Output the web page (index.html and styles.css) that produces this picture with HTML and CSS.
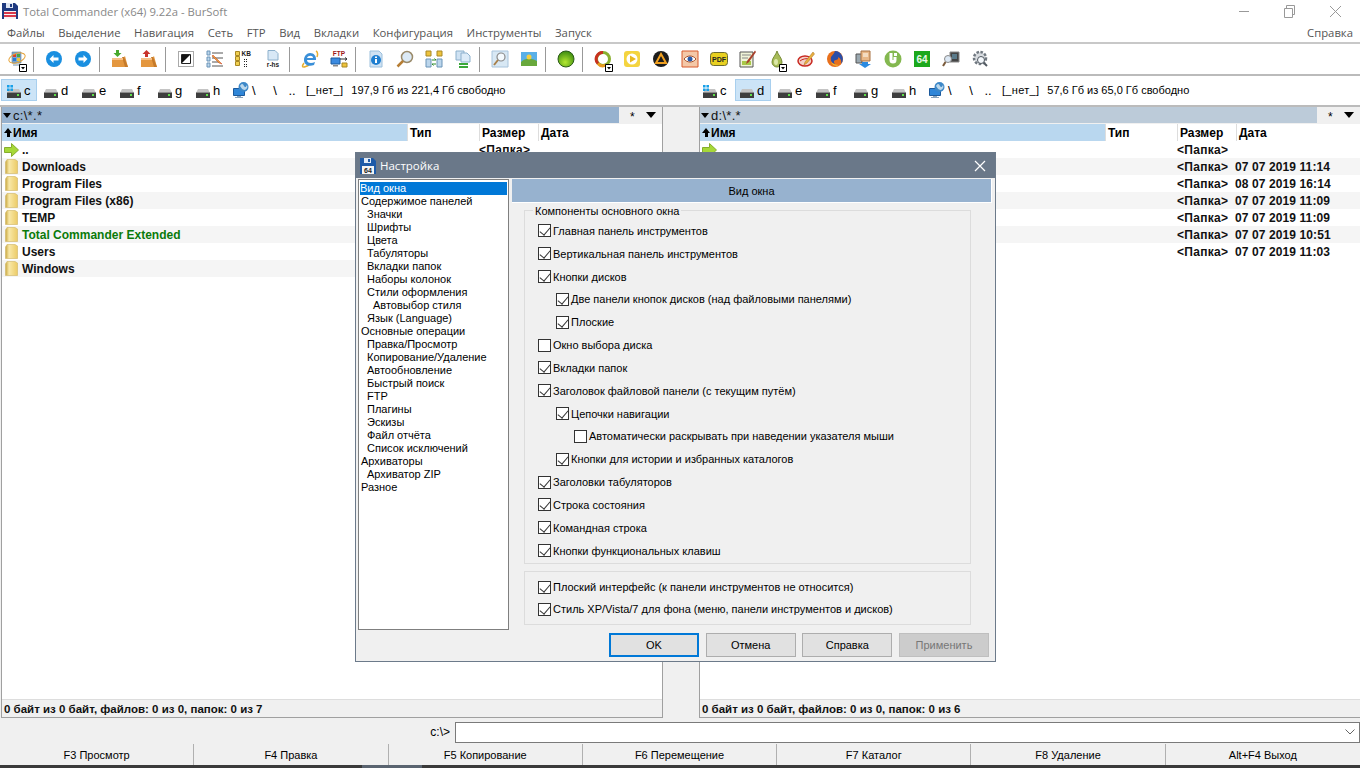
FILE: index.html
```html
<!DOCTYPE html>
<html lang="ru">
<head>
<meta charset="utf-8">
<title>Total Commander</title>
<link rel="stylesheet" href="styles.css">
</head>
<body>
<svg class="defs" width="0" height="0">
  <defs>
    <symbol id="floppy" viewBox="0 0 16 16"><path d="M0 0h13l3 3v13H0z" fill="#1f3a80"/><path d="M4 0h7v5H4z" fill="#dfe6f2"/><path d="M8 1h2v3H8z" fill="#1f3a80"/><path d="M2 8h12v8H2z" fill="#f4f4f4"/><path d="M2 9h12v2H2zM2 12h12v2H2z" fill="#d8394a"/></symbol>
    <symbol id="floppy64" viewBox="0 0 16 16"><path d="M0 0h13l3 3v13H0z" fill="#1d5aa8"/><path d="M4 0h7v5H4z" fill="#dfe9f6"/><path d="M8 1h2v3H8z" fill="#1d5aa8"/><path d="M2 8h12v8H2z" fill="#f4f4f4"/><text x="8" y="15" font-size="7" font-weight="700" text-anchor="middle" fill="#222" font-family="Liberation Sans">64</text></symbol>
    <symbol id="disk" viewBox="0 0 14 9"><path d="M2 0h10l2 4H0z" fill="#c4c4c4"/><path d="M0 3h14v6H0z" fill="#3e3e3e"/><path d="M0 3h14v1H0z" fill="#8c8c8c"/><path d="M10 5h2v2h-2z" fill="#5ee04a"/></symbol>
    <symbol id="win" viewBox="0 0 7 7"><path d="M0 0h3v3H0zM4 0h3v3H4zM0 4h3v3H0zM4 4h3v3H4z" fill="#18a0e8"/></symbol>
    <symbol id="net" viewBox="0 0 16 16"><path d="M.5 6.500h11v7H.5z" fill="#2f86d8" stroke="#1c5a9c"/><path d="M4 14h4v1h2v1H2v-1h2z" fill="#8aa4bc"/><circle cx="10.500" cy="5" r="5" fill="#3d88c8"/><path d="M7 4c2-3 3-2 4 0s2 1 3-1c1 2 0 4-2 5-2 0-3-1-5-4z" fill="#bcd8ec"/></symbol>
    <symbol id="folder" viewBox="0 0 13 15"><defs><linearGradient id="fg" x1="0" x2="1" y1="0" y2="0"><stop offset="0" stop-color="#c8a73e"/><stop offset=".3" stop-color="#f8e8a8"/><stop offset="1" stop-color="#eccb66"/></linearGradient></defs><path d="M.5 3 2 .500h8L12.500 2v12.500H.5z" fill="url(#fg)" stroke="#d4bc70" stroke-width=".7"/></symbol>
    <symbol id="uparrow" viewBox="0 0 15 14"><path d="M.5 4.500h7V.5l7 6.500-7 6.500v-4h-7z" fill="#a6d838" stroke="#86ad2c"/></symbol>
    <symbol id="circleL" viewBox="0 0 16 16"><circle cx="8" cy="8" r="8" fill="#1a8fe0"/><path d="M7.500 4 3.500 8l4 4V9.500h5v-3h-5z" fill="#fff"/></symbol>
    <symbol id="circleR" viewBox="0 0 16 16"><circle cx="8" cy="8" r="8" fill="#1a8fe0"/><path d="M8.500 4l4 4-4 4V9.500h-5v-3h5z" fill="#fff"/></symbol>
    <symbol id="boxD" viewBox="0 0 18 18"><path d="M1 8h11l2-2 3 11H1z" fill="#e4973f"/><path d="M11 7h2l4 10h-3z" fill="#c57a2a"/><path d="M1 8h11v2H1z" fill="#f6c088"/><path d="M5 0h3v3h2.500L6.500 7 2.500 3H5z" fill="#46a82c"/></symbol>
    <symbol id="boxU" viewBox="0 0 18 18"><path d="M1 8h11l2-2 3 11H1z" fill="#e4973f"/><path d="M11 7h2l4 10h-3z" fill="#c57a2a"/><path d="M1 8h11v2H1z" fill="#f6c088"/><path d="M5 7h3V4h2.500L6.500 0 2.500 4H5z" fill="#c8332c"/></symbol>
    <symbol id="mag" viewBox="0 0 18 18"><circle cx="11" cy="7" r="5.500" fill="#dceaf6" stroke="#9a8a6a" stroke-width="1.500"/><path d="M7 11 1.500 16.500" stroke="#b77e34" stroke-width="2.500"/></symbol>
    <symbol id="arrowbox" viewBox="0 0 8 8"><path d="M.5.500h7v7h-7z" fill="#fff" stroke="#000"/><path d="M2 3h4L4 5.500z" fill="#000"/></symbol>
  </defs>
</svg>

<div class="app">
  <header class="titlebar">
    <svg class="title-ic"><use href="#floppy"/></svg>
    <span class="title-text">Total Commander (x64) 9.22a - BurSoft</span>
    <div class="winbtns">
      <svg class="wb" viewBox="0 0 46 21"><path d="M18 10.500h10" stroke="#999"/></svg>
      <svg class="wb" viewBox="0 0 46 21"><path d="M17.500 7.500h8v9h-8zM19.500 7V4.500h8v9H26" fill="none" stroke="#999"/></svg>
      <svg class="wb" viewBox="0 0 46 21"><path d="M17 5l11 11M28 5 17 16" stroke="#999"/></svg>
    </div>
  </header>
  <nav class="menubar">
    <span>Файлы</span><span>Выделение</span><span>Навигация</span><span>Сеть</span><span>FTP</span><span>Вид</span><span>Вкладки</span><span>Конфигурация</span><span>Инструменты</span><span>Запуск</span><span class="menu-help">Справка</span>
  </nav>
  <div class="toolbar">
    <div class="tb"><svg viewBox="0 0 18 18"><path d="M4 2h9v11H4z" fill="#7ea6c8" stroke="#5f7f9c" stroke-width=".6"/><path d="M5 4h3v3H5z" fill="#d8402c"/><path d="M9 4h3v3H9z" fill="#45a845"/><path d="M5 8h3v3H5z" fill="#2a78d8"/><path d="M9 8h3v3H9z" fill="#eec33c"/><path d="M5 13h7v3H5z" fill="#b8c8d4"/><ellipse cx="9" cy="8" rx="8.500" ry="4.500" fill="none" stroke="#e6a43c" transform="rotate(-20 9 8)"/></svg><svg class="tb-drop"><use href="#arrowbox"/></svg></div>
    <i class="sep"></i>
    <div class="tb"><svg class="s16"><use href="#circleL"/></svg></div>
    <div class="tb"><svg class="s16"><use href="#circleR"/></svg></div>
    <i class="sep"></i>
    <div class="tb"><svg viewBox="0 0 18 18"><use href="#boxD"/></svg></div>
    <div class="tb"><svg viewBox="0 0 18 18"><use href="#boxU"/></svg></div>
    <i class="sep"></i>
    <div class="tb"><svg class="s16" viewBox="0 0 16 16"><path d="M.5.500h15v15H.5z" fill="none" stroke="#555" stroke-dasharray="1 1"/><path d="M3.500 3.500h9v9h-9z" fill="#fff" stroke="#222"/><path d="M4 4h8L4 12z" fill="#111"/></svg></div>
    <div class="tb"><svg viewBox="0 0 18 18"><path d="M1 1h3v4H1zM1 7h3v4H1zM1 13h3v4H1z" fill="#bcd6ec" stroke="#6a94b8"/><path d="M6 3h11M6 8h11M6 12h7M6 16h11" stroke="#555"/><path d="M7 5l7 7 2 2-3-1-7-7z" fill="#e8a43c" stroke="#c8381c" stroke-width=".5"/></svg></div>
    <div class="tb"><svg viewBox="0 0 18 18"><path d="M.5 1.500h4v4h-4zM.5 6.500h4v4h-4zM.5 11.500h4v4h-4z" fill="#f0cf50" stroke="#a88824"/><text x="6.500" y="6" class="svgt" font-size="6.500" font-weight="700">KB</text><path d="M9 9h1v1H9zM11 9h1v1h-1zM9 11h1v1H9zM11 11h1v1h-1zM9 14h1v1H9zM11 14h1v1h-1zM9 16h1v1H9zM11 16h1v1h-1z" fill="#222"/></svg></div>
    <div class="tb"><svg viewBox="0 0 18 18"><path d="M4 .500h7l3 3V10H4z" fill="#d8e8f6" stroke="#8cb0cc"/><text x="9" y="16.500" class="svgt" font-size="6.500" font-weight="700" text-anchor="middle">r-hs</text></svg></div>
    <i class="sep"></i>
    <div class="tb"><svg viewBox="0 0 18 18"><path d="M15 1c2 1 2 3 1 6M3 13c-2 3-2 4 0 4 1 0 3-1 5-2" fill="none" stroke="#e8b030" stroke-width="1.500"/><path d="M9 3c4 0 6 3 6 6v1H6c0 3 4 4 8 2l-1 3c-5 2-10 0-10-5 0-4 3-7 6-7zM6 8h6c0-3-5-3-6 0z" fill="#3a8fd8"/></svg></div>
    <div class="tb"><svg viewBox="0 0 18 18"><text x="9" y="6" class="svgt ftp" font-size="6.500" font-weight="700" text-anchor="middle">FTP</text><path d="M1 8h9v6H1z" fill="#3a8ae0" stroke="#1c5a9c"/><path d="M3 15h5v1.500H3z" fill="#888"/><path d="M12 13h5v4h-5z" fill="#eec33c" stroke="#a88824"/><path d="M10 9h7M15 7.500 17 9l-2 1.500" fill="none" stroke="#333"/></svg></div>
    <i class="sep"></i>
    <div class="tb"><svg viewBox="0 0 18 18"><path d="M3 1h9l3 3v13H3z" fill="#cfe2f3" stroke="#9cc0dc"/><circle cx="9" cy="10" r="5" fill="#1e7ed0"/><path d="M8 6.500h2V8H8zM8 9h2v4H8z" fill="#fff"/></svg></div>
    <div class="tb"><svg viewBox="0 0 18 18"><use href="#mag"/></svg></div>
    <div class="tb"><svg viewBox="0 0 18 18"><path d="M1 1h5v5H1zM12 1h5v5h-5z" fill="#eec33c" stroke="#a88824"/><path d="M1 9h5v8H1zM12 9h5v8h-5z" fill="#bcd6ec" stroke="#6a94b8"/><path d="M7 10h4l-1.500-1.500M11 14H7l1.500 1.500" fill="none" stroke="#2a8a2a"/></svg></div>
    <div class="tb"><svg viewBox="0 0 18 18"><path d="M2 1h8v9H2z" fill="#cfe2f3" stroke="#8cb0cc"/><path d="M7 3h6l3 3v6H7z" fill="#dcebf8" stroke="#8cb0cc"/><path d="M5 13h9v2H5zM5 16h9v2H5z" fill="#3aa83a"/></svg></div>
    <i class="sep"></i>
    <div class="tb"><svg viewBox="0 0 18 18"><path d="M1 1h16v16H1z" fill="#d8e8f4" stroke="#a8c4dc"/><circle cx="10" cy="7" r="4" fill="#f4fafe" stroke="#8a8a8a" stroke-width="1.200"/><path d="M7 10l-4 5" stroke="#a8804a" stroke-width="2"/></svg></div>
    <div class="tb"><svg viewBox="0 0 18 18"><path d="M1 2h16v14H1z" fill="#5ab0e8"/><path d="M1 16v-4c4-4 10-4 16-1v5z" fill="#68a83c"/><circle cx="9" cy="7" r="2.500" fill="#f4d040"/></svg></div>
    <i class="sep"></i>
    <div class="tb"><svg viewBox="0 0 18 18"><defs><radialGradient id="gs" cx=".45" cy=".7" r=".7"><stop offset="0" stop-color="#b4e830"/><stop offset="1" stop-color="#3a8a10"/></radialGradient></defs><circle cx="9" cy="9" r="8" fill="url(#gs)" stroke="#2a5a18"/></svg></div>
    <i class="sep"></i>
    <div class="tb"><svg viewBox="0 0 18 18"><circle cx="9" cy="9" r="6.500" fill="none" stroke="#8ab030" stroke-width="3"/><path d="M9 2.500A6.500 6.500 0 0 0 4 13.500" fill="none" stroke="#c83020" stroke-width="3"/><path d="M4 13.500A6.500 6.500 0 0 0 12 15" fill="none" stroke="#e89a20" stroke-width="3"/></svg><svg class="tb-drop"><use href="#arrowbox"/></svg></div>
    <div class="tb"><svg viewBox="0 0 18 18"><rect x="1" y="1" width="16" height="16" rx="3" fill="#f4d440"/><circle cx="9" cy="9" r="5.500" fill="#fff"/><path d="M7 5.500 13 9l-6 3.500z" fill="#e8b820"/></svg></div>
    <div class="tb"><svg viewBox="0 0 18 18"><circle cx="9" cy="9" r="8" fill="#1c1c1c"/><path d="M9 4l5 9H4z" fill="none" stroke="#f0a020" stroke-width="2"/></svg></div>
    <div class="tb"><svg viewBox="0 0 18 18"><path d="M1 1h16v16H1z" fill="#f4c8a8" stroke="#d85a2c"/><path d="M3 9c3-4 9-4 12 0-3 4-9 4-12 0z" fill="#fff" stroke="#a85028"/><circle cx="9" cy="9" r="2.500" fill="#2a5aa8"/></svg></div>
    <div class="tb"><svg viewBox="0 0 18 14"><rect x=".5" y=".5" width="17" height="13" rx="3" fill="#e8d020" stroke="#6a6a30"/><text x="9" y="10" class="svgt" font-size="7" font-weight="700" text-anchor="middle">PDF</text></svg></div>
    <div class="tb"><svg viewBox="0 0 18 18"><path d="M1 2h13v15H1z" fill="#f0f4d8" stroke="#555"/><path d="M3 5h9M3 8h6" stroke="#888"/><path d="M3 11h9v4H3z" fill="#a8c848"/><path d="M16 .500 8 11l-1 3 3-2L17 2z" fill="#a8402c"/></svg></div>
    <div class="tb"><svg viewBox="0 0 18 18"><path d="M9 1c1 4 5 7 5 11a5 5 0 0 1-10 0c0-4 4-7 5-11z" fill="#a8bc58" stroke="#788c38"/><ellipse cx="8" cy="12" rx="2" ry="3" fill="#dce8a8"/></svg><svg class="tb-drop"><use href="#arrowbox"/></svg></div>
    <div class="tb"><svg viewBox="0 0 18 18"><ellipse cx="8" cy="11" rx="7" ry="5" fill="#f4d0c8" stroke="#c82820" stroke-width="1.500"/><path d="M3 11c2-2 7-3 10-2" fill="none" stroke="#c82820"/><path d="M16 2 8 12l-1 3 3-2L17.500 4z" fill="#e8b040" stroke="#a87020" stroke-width=".5"/></svg></div>
    <div class="tb"><svg viewBox="0 0 18 18"><circle cx="9" cy="9" r="8" fill="#e8701c"/><path d="M9 1a8 8 0 0 1 6 13c1-4-1-6-3-7 1 2-1 3-2 3-2 0-3 2-1 4-3-1-5-3-4-7 1-2 3-3 4-6z" fill="#2a4ea8"/><path d="M5 12c1 3 5 5 8 3-4 0-6-1-8-3z" fill="#f4c030"/></svg></div>
    <div class="tb"><svg viewBox="0 0 18 18"><path d="M1 4h6v9H1z" fill="#9aa8b0" stroke="#555"/><path d="M6 1h9v10H6z" fill="#e8b888" stroke="#a87040"/><path d="M8 3h5v4H8z" fill="#f4dcc0"/><path d="M7 12h6v2h3l-6 4-6-4h3z" fill="#2a8ae0"/></svg></div>
    <div class="tb"><svg viewBox="0 0 18 18"><circle cx="9" cy="9" r="8.500" fill="#84b850"/><path d="M5.500 3v7a3.500 3.500 0 0 0 7 0V7h-3v3h-1V3z" fill="#fff"/><path d="M10 3h3v3h-3z" fill="#fff"/></svg></div>
    <div class="tb"><svg viewBox="0 0 18 18"><path d="M1 1h16v16H1z" fill="#1ca81c"/><text x="9" y="13" class="svgt s64" font-size="10" font-weight="700" text-anchor="middle">64</text></svg></div>
    <div class="tb"><svg viewBox="0 0 18 18"><path d="M8 2h9v10H8z" fill="#444" stroke="#888"/><path d="M10 4h5v5h-5z" fill="#5a7a8a"/><circle cx="6" cy="9" r="3.500" fill="#dce8f4" stroke="#8a8a8a"/><path d="M3.500 12 1 16" stroke="#7a5a3a" stroke-width="2"/></svg></div>
    <div class="tb"><svg viewBox="0 0 18 18"><circle cx="9" cy="8" r="6" fill="#d8dce0" stroke="#707880" stroke-width="2.500" stroke-dasharray="2.500 1.500"/><circle cx="10" cy="10" r="3.500" fill="#f4f8fc" stroke="#505860"/><path d="M13 13l3 3" stroke="#505860" stroke-width="2"/></svg></div>
  </div>
  <div class="drivebars">
    <div class="drivebar">
      <div class="drive c active"><svg class="win"><use href="#win"/></svg><svg class="dk"><use href="#disk"/></svg><span>c</span></div>
      <div class="drive"><svg class="dk"><use href="#disk"/></svg><span>d</span></div>
      <div class="drive"><svg class="dk"><use href="#disk"/></svg><span>e</span></div>
      <div class="drive"><svg class="dk"><use href="#disk"/></svg><span>f</span></div>
      <div class="drive"><svg class="dk"><use href="#disk"/></svg><span>g</span></div>
      <div class="drive"><svg class="dk"><use href="#disk"/></svg><span>h</span></div>
      <div class="drive net"><svg class="nt"><use href="#net"/></svg><span>\</span></div>
      <span class="drv-sym">\</span><span class="drv-sym dots">..</span>
      <span class="drv-none">[_нет_]</span>
      <span class="drv-free">197,9 Гб из 221,4 Гб свободно</span>
    </div>
    <div class="drivebar">
      <div class="drive c"><svg class="win"><use href="#win"/></svg><svg class="dk"><use href="#disk"/></svg><span>c</span></div>
      <div class="drive active"><svg class="dk"><use href="#disk"/></svg><span>d</span></div>
      <div class="drive"><svg class="dk"><use href="#disk"/></svg><span>e</span></div>
      <div class="drive"><svg class="dk"><use href="#disk"/></svg><span>f</span></div>
      <div class="drive"><svg class="dk"><use href="#disk"/></svg><span>g</span></div>
      <div class="drive"><svg class="dk"><use href="#disk"/></svg><span>h</span></div>
      <div class="drive net"><svg class="nt"><use href="#net"/></svg><span>\</span></div>
      <span class="drv-sym">\</span><span class="drv-sym dots">..</span>
      <span class="drv-none">[_нет_]</span>
      <span class="drv-free">57,6 Гб из 65,0 Гб свободно</span>
    </div>
  </div>
  <main class="panels">
    <section class="panel">
      <div class="path active"><span class="path-text"><b class="tri"></b>c:\*.*</span><span class="path-star">*</span><b class="path-down"></b></div>
      <div class="cols">
        <div class="col name active"><b class="up"></b>Имя</div><div class="col type">Тип</div><div class="col size">Размер</div><div class="col date">Дата</div>
      </div>
      <div class="rows">
        <div class="row"><svg class="up-ic"><use href="#uparrow"/></svg><span class="fname">..</span><span class="fsize">&lt;Папка&gt;</span><span class="fdate"></span></div>
        <div class="row alt"><svg class="fol"><use href="#folder"/></svg><span class="fname">Downloads</span></div>
        <div class="row"><svg class="fol"><use href="#folder"/></svg><span class="fname">Program Files</span></div>
        <div class="row alt"><svg class="fol"><use href="#folder"/></svg><span class="fname">Program Files (x86)</span></div>
        <div class="row"><svg class="fol"><use href="#folder"/></svg><span class="fname">TEMP</span></div>
        <div class="row alt green"><svg class="fol"><use href="#folder"/></svg><span class="fname">Total Commander Extended</span></div>
        <div class="row"><svg class="fol"><use href="#folder"/></svg><span class="fname">Users</span></div>
        <div class="row alt"><svg class="fol"><use href="#folder"/></svg><span class="fname">Windows</span></div>
      </div>
      <div class="status">0 байт из 0 байт, файлов: 0 из 0, папок: 0 из 7</div>
    </section>
    <section class="panel right">
      <div class="path"><span class="path-text"><b class="tri"></b>d:\*.*</span><span class="path-star">*</span><b class="path-down"></b></div>
      <div class="cols">
        <div class="col name active"><b class="up"></b>Имя</div><div class="col type">Тип</div><div class="col size">Размер</div><div class="col date">Дата</div>
      </div>
      <div class="rows">
        <div class="row"><svg class="up-ic"><use href="#uparrow"/></svg><span class="fname"></span><span class="fsize">&lt;Папка&gt;</span><span class="fdate"></span></div>
        <div class="row alt"><span class="fname"></span><span class="fsize">&lt;Папка&gt;</span><span class="fdate">07 07 2019 11:14</span></div>
        <div class="row"><span class="fname"></span><span class="fsize">&lt;Папка&gt;</span><span class="fdate">08 07 2019 16:14</span></div>
        <div class="row alt"><span class="fname"></span><span class="fsize">&lt;Папка&gt;</span><span class="fdate">07 07 2019 11:09</span></div>
        <div class="row"><span class="fname"></span><span class="fsize">&lt;Папка&gt;</span><span class="fdate">07 07 2019 11:09</span></div>
        <div class="row alt"><span class="fname"></span><span class="fsize">&lt;Папка&gt;</span><span class="fdate">07 07 2019 10:51</span></div>
        <div class="row"><span class="fname"></span><span class="fsize">&lt;Папка&gt;</span><span class="fdate">07 07 2019 11:03</span></div>
      </div>
      <div class="status">0 байт из 0 байт, файлов: 0 из 0, папок: 0 из 6</div>
    </section>
  </main>
  <div class="cmd">
    <span class="cmd-label">c:\&gt;</span>
    <div class="cmd-input"><svg class="chev" viewBox="0 0 10 6"><path d="M.5.500 5 5 9.500.5" fill="none" stroke="#666"/></svg></div>
  </div>
  <footer class="fkeys">
    <span>F3 Просмотр</span><span>F4 Правка</span><span>F5 Копирование</span><span>F6 Перемещение</span><span>F7 Каталог</span><span>F8 Удаление</span><span>Alt+F4 Выход</span>
  </footer>
  <div class="taskbar"><i class="task-active"></i></div>
</div>

<div class="dialog">
  <div class="dlg-title">
    <svg class="dlg-ic"><use href="#floppy64"/></svg>
    <span>Настройка</span>
    <svg class="dlg-close" viewBox="0 0 12 12"><path d="M1 1l10 10M11 1 1 11" stroke="#fff" stroke-width="1.200"/></svg>
  </div>
  <div class="dlg-body">
    <ul class="tree">
      <li class="sel">Вид окна</li>
      <li>Содержимое панелей</li>
      <li class="l1">Значки</li>
      <li class="l1">Шрифты</li>
      <li class="l1">Цвета</li>
      <li class="l1">Табуляторы</li>
      <li class="l1">Вкладки папок</li>
      <li class="l1">Наборы колонок</li>
      <li class="l1">Стили оформления</li>
      <li class="l2">Автовыбор стиля</li>
      <li class="l1">Язык (Language)</li>
      <li>Основные операции</li>
      <li class="l1">Правка/Просмотр</li>
      <li class="l1">Копирование/Удаление</li>
      <li class="l1">Автообновление</li>
      <li class="l1">Быстрый поиск</li>
      <li class="l1">FTP</li>
      <li class="l1">Плагины</li>
      <li class="l1">Эскизы</li>
      <li class="l1">Файл отчёта</li>
      <li class="l1">Список исключений</li>
      <li>Архиваторы</li>
      <li class="l1">Архиватор ZIP</li>
      <li>Разное</li>
    </ul>
    <div class="page">
      <div class="page-head">Вид окна</div>
      <fieldset class="group main-group">
        <legend>Компоненты основного окна</legend>
        <label class="chk"><i class="box on"></i>Главная панель инструментов</label>
        <label class="chk"><i class="box on"></i>Вертикальная панель инструментов</label>
        <label class="chk"><i class="box on"></i>Кнопки дисков</label>
        <label class="chk in1"><i class="box on"></i>Две панели кнопок дисков (над файловыми панелями)</label>
        <label class="chk in1"><i class="box on"></i>Плоские</label>
        <label class="chk"><i class="box"></i>Окно выбора диска</label>
        <label class="chk"><i class="box on"></i>Вкладки папок</label>
        <label class="chk"><i class="box on"></i>Заголовок файловой панели (с текущим путём)</label>
        <label class="chk in1"><i class="box on"></i>Цепочки навигации</label>
        <label class="chk in2"><i class="box"></i>Автоматически раскрывать при наведении указателя мыши</label>
        <label class="chk in1"><i class="box on"></i>Кнопки для истории и избранных каталогов</label>
        <label class="chk"><i class="box on"></i>Заголовки табуляторов</label>
        <label class="chk"><i class="box on"></i>Строка состояния</label>
        <label class="chk"><i class="box on"></i>Командная строка</label>
        <label class="chk"><i class="box on"></i>Кнопки функциональных клавиш</label>
      </fieldset>
      <div class="group second-group">
        <label class="chk"><i class="box on"></i>Плоский интерфейс (к панели инструментов не относится)</label>
        <label class="chk"><i class="box on"></i>Стиль XP/Vista/7 для фона (меню, панели инструментов и дисков)</label>
      </div>
    </div>
  </div>
  <div class="dlg-btns">
    <button class="btn default">OK</button>
    <button class="btn">Отмена</button>
    <button class="btn">Справка</button>
    <button class="btn disabled">Применить</button>
  </div>
</div>
</body>
</html>
```
FILE: styles.css
```css
* { box-sizing: border-box; }
html, body { margin: 0; height: 100%; overflow: hidden; }
body { font-family: "Liberation Sans", Arial, sans-serif; font-size: 11px; color: #000; background: #f0f0f0; position: relative; }
.defs { position: absolute; }
.app { width: 1360px; height: 768px; display: flex; flex-direction: column; }

.titlebar { height: 22px; background: #fff; display: flex; align-items: center; padding-left: 2px; flex: none; }
.title-ic { width: 16px; height: 16px; margin-right: 5px; }
.title-text { font-family: "Open Sans", sans-serif; font-size: 11.3px; color: #888; }
.winbtns { margin-left: auto; margin-right: 1px; display: flex; }
.wb { width: 46px; height: 21px; }

.menubar { height: 22px; background: #fff; display: flex; align-items: center; padding-left: 7px; gap: 13.6px; flex: none; font-family: "Open Sans", sans-serif; font-size: 11.3px; color: #555; border-bottom: 2px solid #c8c8c8; }
.menu-help { margin-left: auto; margin-right: 7px; }

.toolbar { height: 32px; background: #fff; display: flex; align-items: center; padding-left: 2px; flex: none; border-bottom: 2px solid #bbb; }
.tb { width: 29px; height: 22px; display: flex; align-items: center; justify-content: center; position: relative; flex: none; }
.tb svg { width: 18px; height: 18px; }
.tb svg.s16 { width: 16px; height: 16px; }
.tb .tb-drop { position: absolute; width: 8px; height: 8px; right: 4px; bottom: -2px; }
.svgt { font-family: "Liberation Sans", sans-serif; fill: #222; }
.svgt.ftp { fill: #a01818; }
.svgt.s64 { fill: #e8f8e8; }
.sep { width: 1px; height: 25px; background: #999; margin: 0 5px 0 2px; flex: none; }

.drivebars { height: 31px; background: #fff; display: flex; flex: none; padding-top: 3px; border-bottom: 2px solid #bbb; }
.drivebar { width: 697px; display: flex; align-items: center; padding-left: 1px; font-size: 11px; height: 22px; flex: none; }
.drivebar + .drivebar { width: 663px; padding-left: 0; }
.drive { width: 36px; height: 22px; margin-right: 2px; display: flex; align-items: center; position: relative; padding-left: 4px; flex: none; font-size: 13px; border: 1px solid transparent; }
.drive.c { padding-left: 5px; }
.drive.active { background: #cce4f7; border-color: #a8cfee; }
.dk { width: 14px; height: 9px; margin-top: 6px; margin-right: 3px; flex: none; }
.win { position: absolute; width: 6px; height: 6px; left: 5px; top: 5px; }
.nt { width: 16px; height: 16px; margin-right: 3px; flex: none; }
.drive.net { padding-left: 3px; width: 35px; margin-right: 0; }
.drv-sym { width: 22px; text-align: center; font-size: 13px; flex: none; }
.drv-sym.dots { width: 12px; }
.drv-none { margin: 0 8px; letter-spacing: .3px; }
.drv-free { white-space: nowrap; }

.panels { flex: 1; display: flex; min-height: 0; }
.panel { width: 662px; margin-left: 1px; margin-right: 36px; display: flex; flex-direction: column; border: 1px solid #a0a0a0; border-top: 0; flex: none; }
.panel.right { margin: 0; width: 661px; border-right: 0; }
.path { height: 17px; background: #bccbd9; display: flex; align-items: center; flex: none; font-size: 13px; letter-spacing: .3px; border-bottom: 1px solid #f0f0f0; }
.path.active { background: #97b2cf; }
.path-text { flex: 1; color: #111; display: flex; align-items: center; padding-left: 1px; }
.tri { width: 0; height: 0; margin-right: 2px; border: 4px solid transparent; border-top: 5px solid #000; border-bottom: 0; }
.path-star, .path-down { background: #f0f0f0; }
.path-star { width: 22px; height: 16px; text-align: right; padding: 3px 6px 0 0; font-size: 12px; }
.path-down { width: 21px; height: 16px; position: relative; }
.path-down::after { content: ""; position: absolute; left: 5px; top: 5px; border: 5px solid transparent; border-top: 6px solid #000; border-bottom: 0; }

.cols { height: 17px; display: flex; background: #fff; flex: none; font-weight: 700; align-items: stretch; font-size: 12px; }
.col { display: flex; align-items: center; padding-left: 2px; border-right: 1px solid #ddd; }
.col.name { width: 406px; background: #b9d7ef; }
.col.type { width: 72px; }
.col.size { width: 59px; }
.col.date { flex: 1; border-right: 0; }
.up { width: 0; height: 0; margin-right: 1px; position: relative; border: 4px solid transparent; border-bottom: 5px solid #000; border-top: 0; top: -2px; }
.up::after { content: ""; position: absolute; left: -1.5px; top: 5px; width: 3px; height: 4px; background: #000; }

.rows { flex: 1; background: #fff; overflow: hidden; min-height: 0; }
.row { height: 17px; display: flex; align-items: center; font-weight: 700; font-size: 12px; position: relative; color: #111; }
.row.alt { background: #f5f5f5; }
.row.green { color: #0a7a0a; }
.fol { width: 13px; height: 15px; margin-left: 3px; margin-right: 4px; flex: none; }
.up-ic { width: 15px; height: 14px; margin-left: 2px; margin-right: 3px; flex: none; }
.fname { white-space: nowrap; }
.fsize { position: absolute; left: 477px; letter-spacing: .3px; }
.fdate { position: absolute; left: 535px; letter-spacing: .1px; }
.status { height: 18px; flex: none; background: #f0f0f0; border-top: 1px solid #ddd; font-weight: 700; font-size: 11.5px; padding-left: 2px; display: flex; align-items: center; color: #111; }

.cmd { height: 26px; flex: none; display: flex; align-items: center; padding-top: 2px; justify-content: flex-end; }
.cmd-label { margin-right: 5px; font-size: 12px; }
.cmd-input { width: 905px; height: 21px; background: #fff; border: 1px solid #7a7a7a; display: flex; align-items: center; justify-content: flex-end; padding-right: 4px; }
.chev { width: 10px; height: 6px; }
.fkeys { height: 21px; display: grid; grid-template-columns: repeat(7, 1fr); flex: none; font-size: 11px; }
.fkeys span { display: flex; align-items: center; justify-content: center; border-right: 1px solid #b0b0b0; }
.fkeys span:last-child { border-right: 0; }
.taskbar { height: 3px; flex: none; background: #3a3a3a; }
.task-active { display: block; width: 60px; height: 3px; margin-left: 362px; background: #5a6470; }

.dialog { position: absolute; left: 355px; top: 152px; width: 641px; height: 510px; background: #f0f0f0; border: 1px solid #6c7a8a; display: flex; flex-direction: column; font-size: 11px; }
.dlg-title { height: 25px; background: #6a7889; color: #fff; display: flex; align-items: center; padding-left: 4px; flex: none; font-family: "Open Sans", sans-serif; font-size: 11.5px; }
.dlg-ic { width: 16px; height: 16px; margin-right: 4px; }
.dlg-close { width: 12px; height: 12px; margin-left: auto; margin-right: 9px; }
.dlg-body { display: flex; flex: 1; min-height: 0; padding: 1px 3px 0 2px; gap: 3px; }
.tree { list-style: none; margin: 0; padding: 2px 1px; width: 151px; height: 451px; background: #fff; border: 1px solid #7f7f7f; flex: none; }
.tree li { height: 13px; line-height: 13px; padding-left: 1px; white-space: nowrap; }
.tree li.sel { background: #0078d7; color: #fff; padding-left: 0; }
.tree li.l1 { padding-left: 7px; }
.tree li.l2 { padding-left: 13px; }
.page { flex: 1; display: flex; flex-direction: column; }
.page-head { height: 24px; background: #97b2cf; border: 1px solid #fff; border-width: 0 1px 1px 0; display: flex; align-items: center; justify-content: center; flex: none; margin-bottom: 7px; }
.group { margin: 0 21px 0 12px; border: 1px solid #dcdcdc; padding: 0 0 0 13px; min-width: 0; }
.main-group { height: 354px; padding-top: 8.4px; position: relative; }
.main-group legend { position: absolute; left: 8px; top: -6px; padding: 0 2px; background: #f0f0f0; line-height: 12px; }
.second-group { height: 54px; margin-top: 7px; padding-top: 4px; }
.chk { display: flex; align-items: center; height: 22.857px; white-space: nowrap; }
.second-group .chk { height: 22px; }
.chk.in1 { padding-left: 18px; }
.chk.in2 { padding-left: 36px; }
.box { width: 13px; height: 13px; border: 1px solid #333; background: #fff; margin-right: 2px; flex: none; position: relative; }
.box.on::after { content: ""; position: absolute; left: 3px; top: 0; width: 5px; height: 9px; border: solid #333; border-width: 0 1px 1px 0; transform: rotate(40deg); }
.dlg-btns { height: 31px; flex: none; display: flex; padding: 3px 0 0 253px; }
.btn { width: 90px; height: 24px; flex: none; font: inherit; background: #e1e1e1; border: 1px solid #adadad; padding: 0; margin-right: 6.67px; color: #000; }
.btn.default { border: 2px solid #0078d7; }
.btn.disabled { background: #ccc; color: #777; border-color: #bfbfbf; margin-right: 0; }
```
